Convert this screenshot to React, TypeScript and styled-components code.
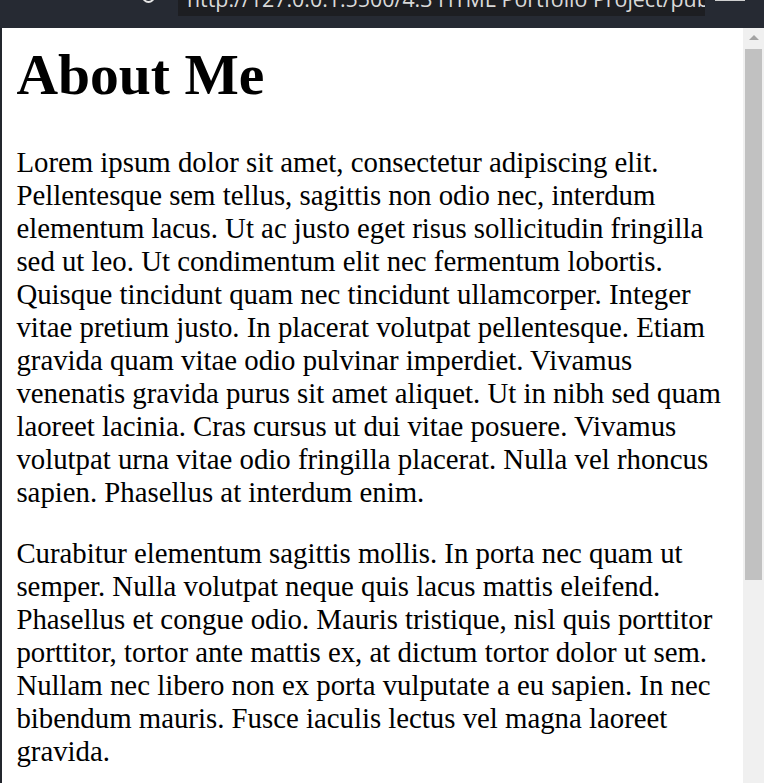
import React from "react";
import styled, { createGlobalStyle } from "styled-components";

const Global = createGlobalStyle`
  html, body { margin: 0; padding: 0; background: #ffffff; }
  body { overflow: hidden; }
`;

const Window = styled.div`
  width: 764px;
  height: 783px;
  display: flex;
  flex-direction: column;
  overflow: hidden;
  background: #262a33;
`;

const TopBar = styled.div`
  height: 28px;
  flex: none;
  display: flex;
  align-items: flex-start;
  background: #262a33;
  overflow: hidden;
`;

const ReloadIcon = styled.div`
  width: 13px;
  height: 13px;
  margin: -10px 23px 0 142px;
  border-radius: 50%;
  border: 2px solid #e6e6e6;
  box-sizing: border-box;
`;

const UrlBox = styled.div`
  width: 527px;
  height: 16px;
  background: #1d1e22;
  overflow: hidden;
  padding-left: 9px;
  box-sizing: border-box;
`;

const UrlText = styled.span`
  display: block;
  margin-top: -16px;
  line-height: 29px;
  font-family: "Open Sans", "Liberation Sans", sans-serif;
  font-size: 21.4px;
  color: #d9d9d9;
  white-space: nowrap;
`;

const MenuLine = styled.div`
  width: 30px;
  height: 1px;
  margin-left: 10px;
  background: #cfcfcf;
`;

const Body = styled.div`
  flex: 1;
  display: flex;
  min-height: 0;
`;

const LeftEdge = styled.div`
  width: 2px;
  flex: none;
  background: #23262d;
`;

const Page = styled.main`
  flex: 1;
  min-width: 0;
  background: #ffffff;
  padding: 14px 14.4px 0 14.4px;
  overflow: hidden;
  font-family: "Liberation Serif", "Times New Roman", serif;
  color: #000;
`;

const Title = styled.h1`
  margin: 0 0 38.6px;
  font-size: 57.6px;
  font-weight: bold;
  line-height: normal;
`;

const Para = styled.p`
  margin: 0 0 28.8px;
  font-size: 28.8px;
  line-height: normal;
`;

const Scrollbar = styled.div`
  width: 21px;
  flex: none;
  background: #f0f0f0;
  display: flex;
  flex-direction: column;
  align-items: center;
`;

const ArrowUp = styled.div`
  width: 0;
  height: 0;
  margin-top: 7px;
  border-left: 5px solid transparent;
  border-right: 5px solid transparent;
  border-bottom: 5px solid #a3a3a3;
`;

const Thumb = styled.div`
  width: 17px;
  height: 531px;
  margin-top: 9px;
  margin-left: 2px;
  align-self: flex-start;
  background: #c1c1c1;
`;

export default function App() {
  return (
    <>
      <Global />
      <Window>
        <TopBar>
          <ReloadIcon />
          <UrlBox>
            <UrlText>http://127.0.0.1:5500/4.3 HTML Portfolio Project/public/about.html</UrlText>
          </UrlBox>
          <MenuLine />
        </TopBar>
        <Body>
          <LeftEdge />
          <Page>
            <Title>About Me</Title>
            <Para>
              Lorem ipsum dolor sit amet, consectetur adipiscing elit. Pellentesque sem tellus, sagittis non odio nec,
              interdum elementum lacus. Ut ac justo eget risus sollicitudin fringilla sed ut leo. Ut condimentum elit
              nec fermentum lobortis. Quisque tincidunt quam nec tincidunt ullamcorper. Integer vitae pretium justo. In
              placerat volutpat pellentesque. Etiam gravida quam vitae odio pulvinar imperdiet. Vivamus venenatis gravida
              purus sit amet aliquet. Ut in nibh sed quam laoreet lacinia. Cras cursus ut dui vitae posuere. Vivamus
              volutpat urna vitae odio fringilla placerat. Nulla vel rhoncus sapien. Phasellus at interdum enim.
            </Para>
            <Para>
              Curabitur elementum sagittis mollis. In porta nec quam ut semper. Nulla volutpat neque quis lacus mattis
              eleifend. Phasellus et congue odio. Mauris tristique, nisl quis porttitor porttitor, tortor ante mattis ex,
              at dictum tortor dolor ut sem. Nullam nec libero non ex porta vulputate a eu sapien. In nec bibendum mauris.
              Fusce iaculis lectus vel magna laoreet gravida.
            </Para>
          </Page>
          <Scrollbar>
            <ArrowUp />
            <Thumb />
          </Scrollbar>
        </Body>
      </Window>
    </>
  );
}
